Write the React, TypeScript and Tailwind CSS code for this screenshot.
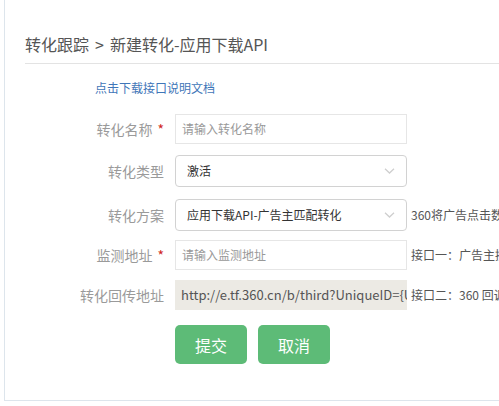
import type { FC, ReactNode } from "react";

const font = { fontFamily: '"Noto Sans CJK SC", "Liberation Sans", sans-serif' };

const Chevron: FC = () => (
  <svg width="11" height="7" viewBox="0 0 11 7" className="absolute right-[11px] top-1/2 -translate-y-1/2">
    <path d="M1 1.2 L5.5 5.5 L10 1.2" fill="none" stroke="#cfcfcf" strokeWidth="1.3" />
  </svg>
);

const Row: FC<{ label: string; required?: boolean; className?: string; children: ReactNode }> = ({
  label,
  required,
  className = "",
  children,
}) => (
  <div className={`flex items-center ${className}`}>
    <div className="w-[140px] shrink-0 pr-[1px] text-right text-[14px] text-[#9a9a9a]">
      {label}
      {required && <span className="ml-[5px] text-[#d0261e]">*</span>}
    </div>
    <div className="ml-[10px] flex min-w-0 items-center">{children}</div>
  </div>
);

const Note: FC<{ children: ReactNode }> = ({ children }) => (
  <span className="ml-[4px] whitespace-nowrap text-[12px] text-[#555]">{children}</span>
);

const callbackUrl = "http://e.tf.360.cn/b/third?UniqueID={UniqueID}";

const App: FC = () => {
  return (
    <div className="h-[406px] w-[499px] overflow-hidden bg-white" style={font}>
      <div className="ml-1 h-[401px] border-b border-l border-[#dde5ec] pl-5">
        <div className="border-b border-[#e3e3e3] pb-[9px] pt-[34px]">
          <h1 className="text-[16px] leading-[20px] text-[#555]">
            转化跟踪<span className="mx-[6px]">&gt;</span>新建转化-应用下载API
          </h1>
        </div>

        <div className="ml-[70px] mt-[16px] text-[12px] leading-[16px] text-[#3f76b8]">点击下载接口说明文档</div>

        <Row label="转化名称" required className="mt-[18px]">
          <div className="flex h-[30px] w-[232px] items-center border border-[#e6e6e6] pl-[6px] text-[12px] text-[#999]">
            请输入转化名称
          </div>
        </Row>

        <Row label="转化类型" className="mt-[11px]">
          <div className="relative flex h-[32px] w-[232px] items-center rounded-[4px] border border-[#d2d2d2] pl-[11px] text-[12px] text-[#333]">
            激活
            <Chevron />
          </div>
        </Row>

        <Row label="转化方案" className="mt-[12px]">
          <div className="relative flex h-[32px] w-[232px] shrink-0 items-center rounded-[4px] border border-[#d2d2d2] pl-[11px] text-[12px] text-[#333]">
            应用下载API-广告主匹配转化
            <Chevron />
          </div>
          <Note>360将广告点击数据推送给广告主</Note>
        </Row>

        <Row label="监测地址" required className="mt-[9px]">
          <div className="flex h-[30px] w-[232px] shrink-0 items-center border border-[#e6e6e6] pl-[6px] text-[12px] text-[#999]">
            请输入监测地址
          </div>
          <Note>接口一：广告主接收点击数据</Note>
        </Row>

        <Row label="转化回传地址" className="mt-[10px]">
          <div className="h-[30px] w-[232px] shrink-0 overflow-hidden whitespace-nowrap bg-[#eceae4] pl-[6px] text-[13px] leading-[30px] text-[#555]">
            {callbackUrl}
          </div>
          <Note>接口二：360 回调地址</Note>
        </Row>

        <div className="ml-[150px] mt-[15px] flex gap-[11px]">
          <button className="h-[39px] w-[72px] rounded-[5px] bg-[#5dbb77] text-[16px] text-white">提交</button>
          <button className="h-[39px] w-[72px] rounded-[5px] bg-[#5dbb77] text-[16px] text-white">取消</button>
        </div>
      </div>
    </div>
  );
};

export default App;
